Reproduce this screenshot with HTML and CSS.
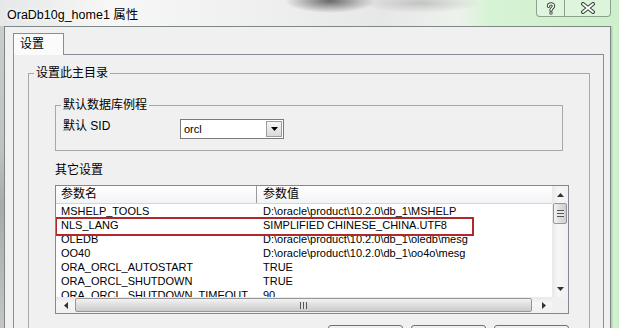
FILE: index.html
```html
<!DOCTYPE html>
<html lang="zh-CN">
<head>
    <meta charset="UTF-8">
    <meta name="viewport" content="width=device-width, initial-scale=1.0">
    <title>OraDb10g_home1 属性</title>
    <link rel="stylesheet" href="styles.css">
</head>
<body>
    <div class="titlebar">
        <span class="title">OraDb10g_home1 属性</span>
        <div class="caption-buttons">
            <span class="cap-btn cap-help">
                <svg width="10" height="13" viewBox="0 0 10 13">
                    <path d="M2.5 4.2 C2.5 1.2 7.5 1.2 7.5 4 C7.5 6 5 6 5 8.2" fill="none" stroke="#3b4a3b" stroke-width="3.4" stroke-linecap="round"/>
                    <circle cx="5" cy="11" r="1.7" fill="#3b4a3b"/>
                    <path d="M2.5 4.2 C2.5 1.2 7.5 1.2 7.5 4 C7.5 6 5 6 5 8.2" fill="none" stroke="#fff" stroke-width="1.4" stroke-linecap="round"/>
                    <circle cx="5" cy="11" r="0.8" fill="#fff"/>
                </svg>
            </span>
            <span class="cap-btn cap-close">
                <svg width="16" height="12" viewBox="0 0 16 12">
                    <path d="M3 2 L13 10 M13 2 L3 10" stroke="#3b4a3b" stroke-width="4" stroke-linecap="round"/>
                    <path d="M3 2 L13 10 M13 2 L3 10" stroke="#fff" stroke-width="1.8" stroke-linecap="round"/>
                </svg>
            </span>
        </div>
    </div>

    <div class="frame">
        <div class="glass-left"></div>
        <div class="client">
            <div class="tabs">
                <span class="tab">设置</span>
            </div>
            <div class="tab-panel">
                <fieldset class="group home-group">
                    <legend>设置此主目录</legend>

                    <fieldset class="group sid-group">
                        <legend>默认数据库例程</legend>
                        <div class="sid-row">
                            <label class="sid-label">默认 SID</label>
                            <div class="combo">
                                <span class="combo-text">orcl</span>
                                <span class="combo-btn">
                                    <svg width="7" height="4" viewBox="0 0 7 4"><polygon points="0,0 7,0 3.5,4" fill="#000"/></svg>
                                </span>
                            </div>
                        </div>
                    </fieldset>

                    <div class="other-label">其它设置</div>

                    <div class="listview">
                        <div class="list-main">
                            <div class="list-header">
                                <span class="col-name">参数名</span>
                                <span class="col-value">参数值</span>
                            </div>
                            <div class="list-row">
                                <span class="col-name">MSHELP_TOOLS</span>
                                <span class="col-value">D:\oracle\product\10.2.0\db_1\MSHELP</span>
                            </div>
                            <div class="list-row marked">
                                <span class="col-name">NLS_LANG</span>
                                <span class="col-value">SIMPLIFIED CHINESE_CHINA.UTF8</span>
                            </div>
                            <div class="list-row">
                                <span class="col-name">OLEDB</span>
                                <span class="col-value">D:\oracle\product\10.2.0\db_1\oledb\mesg</span>
                            </div>
                            <div class="list-row">
                                <span class="col-name">OO40</span>
                                <span class="col-value">D:\oracle\product\10.2.0\db_1\oo4o\mesg</span>
                            </div>
                            <div class="list-row">
                                <span class="col-name">ORA_ORCL_AUTOSTART</span>
                                <span class="col-value">TRUE</span>
                            </div>
                            <div class="list-row">
                                <span class="col-name">ORA_ORCL_SHUTDOWN</span>
                                <span class="col-value">TRUE</span>
                            </div>
                            <div class="list-row">
                                <span class="col-name">ORA_ORCL_SHUTDOWN_TIMEOUT</span>
                                <span class="col-value">90</span>
                            </div>
                        </div>

                        <div class="vscroll">
                            <span class="arrow arrow-v">
                                <svg width="7" height="4" viewBox="0 0 7 4"><polygon points="0,4 7,4 3.5,0" fill="#333"/></svg>
                            </span>
                            <span class="thumb-v">
                                <span class="grip-v"></span>
                            </span>
                            <span class="track"></span>
                            <span class="arrow arrow-v">
                                <svg width="7" height="4" viewBox="0 0 7 4"><polygon points="0,0 7,0 3.5,4" fill="#333"/></svg>
                            </span>
                        </div>

                        <div class="hscroll">
                            <span class="arrow arrow-left">
                                <svg width="4" height="7" viewBox="0 0 4 7"><polygon points="4,0 4,7 0,3.5" fill="#333"/></svg>
                            </span>
                            <span class="thumb-h">
                                <span class="grip-h"></span>
                            </span>
                            <span class="track"></span>
                            <span class="arrow arrow-right">
                                <svg width="4" height="7" viewBox="0 0 4 7"><polygon points="0,0 0,7 4,3.5" fill="#333"/></svg>
                            </span>
                        </div>

                        <div class="corner"></div>
                    </div>

                    <div class="buttons">
                        <span class="btn"></span>
                        <span class="btn"></span>
                        <span class="btn"></span>
                    </div>
                </fieldset>
            </div>
        </div>
        <div class="glass-right"></div>
    </div>
</body>
</html>
```

FILE: styles.css
```css
* {
    box-sizing: border-box;
}
body {
    margin: 0;
    width: 619px;
    height: 328px;
    overflow: hidden;
    display: flex;
    flex-direction: column;
    font-family: "Liberation Sans", "Noto Sans CJK SC", sans-serif;
    font-size: 12px;
    color: #000;
    background: #e8ece8;
}

/* glass caption */
.titlebar {
    height: 26px;
    flex: none;
    display: flex;
    align-items: center;
    padding-left: 7px;
    background:
        radial-gradient(ellipse 45px 12px at 330px 1px, rgba(50, 50, 50, 0.7), rgba(50, 50, 50, 0)),
        radial-gradient(ellipse 60px 10px at 420px 3px, rgba(120, 120, 120, 0.35), rgba(120, 120, 120, 0)),
        linear-gradient(to right, #e6e8e7 0, #f6f7f6 18%, #f0f0f0 40%, #e7e7e7 62%, #edf2ec 74%, #d7f3d5 79%, #cdefcb 100%);
}
.title {
    font-size: 12.5px;
    padding-top: 1px;
    text-shadow: 0 0 6px #fff, 0 0 3px #fff;
}
.caption-buttons {
    margin-left: auto;
    margin-right: 8px;
    align-self: flex-start;
    display: flex;
}
.cap-btn {
    height: 17px;
    display: flex;
    align-items: center;
    justify-content: center;
    border: 1px solid rgba(70, 95, 70, 0.55);
    border-top: none;
    background: rgba(255, 255, 255, 0.3);
}
.cap-help {
    width: 28px;
    border-right: none;
    border-radius: 0 0 0 4px;
}
.cap-close {
    width: 47px;
    border-radius: 0 0 4px 0;
}

/* window body */
.frame {
    flex: 1;
    min-height: 0;
    display: flex;
}
.glass-left {
    width: 4px;
    background: linear-gradient(#c9cdcc, #bfc3c3 40%, #a9aaaa 60%, #c4c6c6);
}
.glass-right {
    width: 8px;
    background: linear-gradient(to right, #a9cfa8, #d5f3d3 35%, #c9eec7);
}
.client {
    flex: 1;
    background: #f0f0f0;
    border: 1px solid #7d8786;
    border-bottom: none;
    padding: 6px 6px 0 8px;
    overflow: hidden;
}

/* tab */
.tabs {
    display: flex;
}
.tab {
    position: relative;
    z-index: 1;
    width: 51px;
    height: 22px;
    margin-bottom: -1px;
    padding-left: 6px;
    line-height: 20px;
    background: #fbfbfb;
    border: 1px solid #898c95;
    border-bottom: none;
}
.tab-panel {
    width: 591px;
    height: 300px;
    border: 1px solid #898c95;
    background: #f0f0f0;
    padding: 11px 13px 0 14px;
}

/* group boxes */
.group {
    margin: 0;
    min-width: 0;
    border: 1px solid #a8a8a8;
}
.group legend {
    padding: 0 2px;
    line-height: 14px;
}
.home-group {
    padding: 18px 26px 20px;
}
.home-group > legend {
    margin-left: -21px;
}
.sid-group {
    padding: 7px 7px 11px;
}
.sid-group > legend {
    margin-left: -2px;
}
.sid-row {
    display: flex;
}
.sid-label {
    width: 117px;
    line-height: 14px;
}
.combo {
    width: 104px;
    height: 20px;
    display: flex;
    align-items: center;
    background: #fff;
    border: 1px solid #7a7a7a;
}
.combo-text {
    flex: 1;
    padding-left: 3px;
    font-size: 11px;
}
.combo-btn {
    width: 16px;
    height: 16px;
    margin-right: 1px;
    display: flex;
    align-items: center;
    justify-content: center;
    border: 1px solid #9c9c9c;
    background: linear-gradient(#f6f6f6, #dadada);
}
.other-label {
    margin: 12px 0 8px;
    line-height: 14px;
}

/* list view */
.listview {
    width: 514px;
    height: 129px;
    display: grid;
    grid-template-columns: 1fr 16px;
    grid-template-rows: 1fr 16px;
    border: 1px solid #828790;
    background: #fff;
}
.list-main {
    overflow: hidden;
}
.list-header {
    display: flex;
    height: 18px;
    line-height: 17px;
    border-bottom: 1px solid #d5d5d5;
    background: linear-gradient(#fff, #f2f3f5);
}
.list-header .col-name {
    border-right: 1px solid #9a9a9a;
}
.list-row {
    display: flex;
    height: 14px;
    line-height: 14px;
    font-size: 11px;
    white-space: nowrap;
}
.col-name {
    width: 201px;
    flex: none;
    padding-left: 5px;
}
.col-value {
    padding-left: 6px;
}
.marked {
    position: relative;
}
.marked::after {
    content: "";
    position: absolute;
    left: -1px;
    top: -1px;
    width: 415px;
    height: 15px;
    border: 2px solid #b0282b;
}

/* scroll bars */
.vscroll {
    display: flex;
    flex-direction: column;
    background: linear-gradient(to right, #e9e9e9, #f6f6f6 40%, #f0f0f0);
}
.hscroll {
    display: flex;
    background: linear-gradient(#e9e9e9, #f6f6f6 40%, #f0f0f0);
}
.track {
    flex: 1;
}
.arrow {
    display: flex;
    align-items: center;
    justify-content: center;
}
.arrow-v {
    height: 17px;
}
.arrow-left {
    width: 19px;
}
.arrow-right {
    width: 17px;
}
.thumb-v {
    height: 21px;
    margin: 0 1px;
    display: flex;
    align-items: center;
    justify-content: center;
    border: 1px solid #979797;
    border-radius: 2px;
    background: linear-gradient(to right, #f3f3f3, #dedede 50%, #cfcfcf);
}
.grip-v {
    width: 7px;
    height: 7px;
    background: repeating-linear-gradient(#555 0, #555 1px, #e8e8e8 1px, #e8e8e8 3px);
}
.thumb-h {
    width: 457px;
    margin: 1px 0;
    display: flex;
    align-items: center;
    justify-content: center;
    border: 1px solid #979797;
    border-radius: 2px;
    background: linear-gradient(#f3f3f3, #dedede 50%, #cbcbcb);
}
.grip-h {
    width: 7px;
    height: 7px;
    background: repeating-linear-gradient(to right, #555 0, #555 1px, #e2e2e2 1px, #e2e2e2 3px);
}
.corner {
    background: #f0f0f0;
}

/* buttons under the list */
.buttons {
    width: 514px;
    margin-top: 11px;
    display: flex;
    justify-content: flex-end;
    gap: 8px;
}
.btn {
    width: 75px;
    height: 23px;
    border: 1px solid #707070;
    border-radius: 3px;
    background: linear-gradient(#f2f2f2, #e2e2e2 50%, #d6d6d6);
}
```
